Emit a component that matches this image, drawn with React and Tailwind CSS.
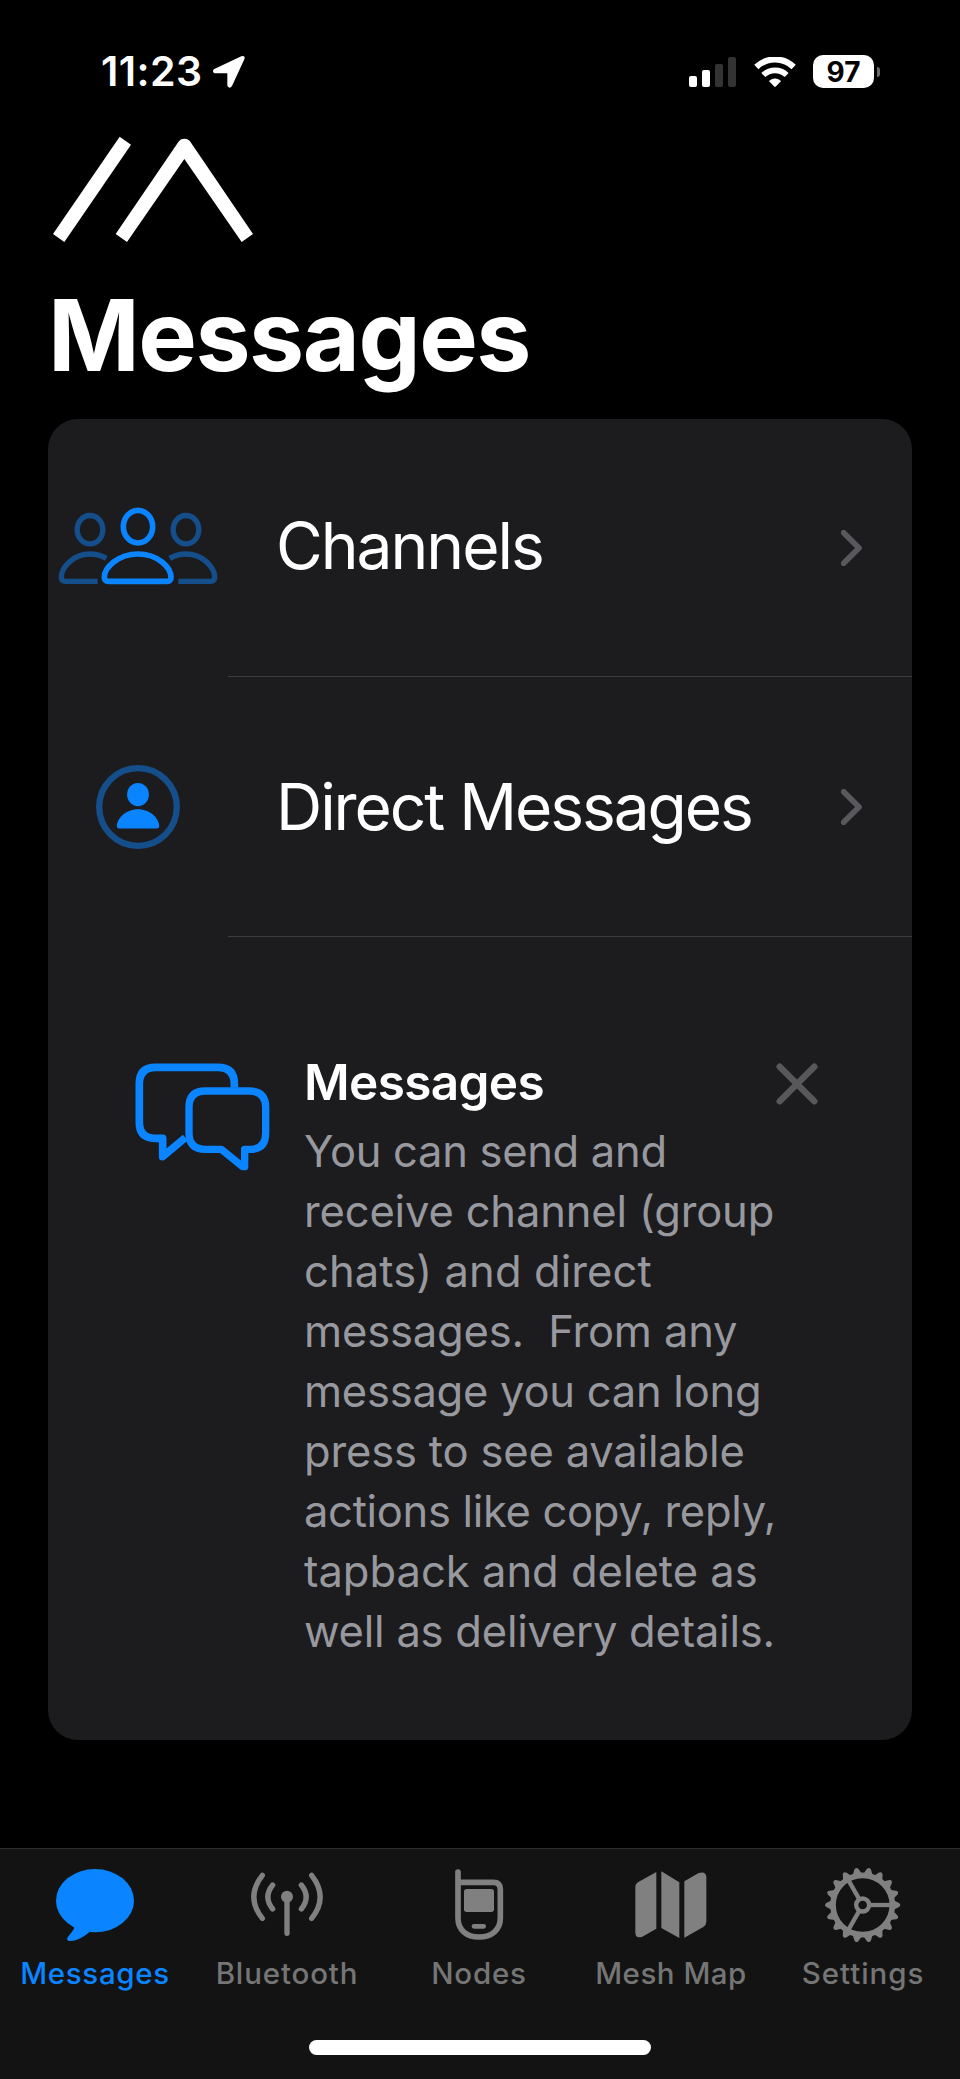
const BLUE = "#0b84ff";
const DIM_BLUE = "#144f8c";
const GRAY = "#808080";

function LocationArrow() {
  return (
    <svg className="ml-[11px] h-8 w-8" viewBox="638 78 96 96" fill="#fff">
      <path d="M642 117 L723 79 Q736 75 732 88 L695 168 Q690 175 685 172 Q681 170 681 164 V130 H647 Q638 130 638 123 Q638 119 642 117Z" />
    </svg>
  );
}

function Signal() {
  return (
    <svg className="h-[30px] w-[47px]" viewBox="147 78 141 90">
      <rect x="147" y="135" width="24" height="33" rx="6" fill="#fff" />
      <rect x="186" y="117" width="24" height="51" rx="6" fill="#fff" />
      <rect x="225" y="99" width="24" height="69" rx="6" fill="#333" />
      <rect x="264" y="78" width="24" height="90" rx="6" fill="#333" />
    </svg>
  );
}

function Wifi() {
  return (
    <svg className="ml-[18px] h-[30px] w-[42px]" viewBox="342 78 126 90" fill="none" stroke="#fff" strokeWidth="18">
      <path d="M349 108 A80 80 0 0 1 461 108" />
      <path d="M370 132 A51 51 0 0 1 440 132" strokeWidth="17" />
      <path d="M388 150 Q405 137 422 150 L408 165 Q405 168 402 165Z" fill="#fff" stroke="#fff" strokeWidth="2" />
    </svg>
  );
}

function StatusBar() {
  return (
    <div className="flex h-[136px] w-full items-start justify-between pl-[101px] pr-20">
      <div className="flex h-[143px] items-center text-[41px] font-semibold tracking-[0.4px]">
        <span>11:23</span>
        <LocationArrow />
      </div>
      <div className="flex h-[143px] items-center">
        <Signal />
        <Wifi />
        <div className="ml-[17px] flex h-[33px] w-[61px] items-center justify-center rounded-[10px] bg-white text-[28px] font-bold leading-none tracking-[0px] text-black">
          97
        </div>
        <div className="ml-[3px] h-[10px] w-[3px] rounded-r-full bg-[#6b6b6b]" />
      </div>
    </div>
  );
}

function Logo() {
  return (
    <svg className="ml-[53px] h-[106px] w-[200px]" viewBox="159 318 600 318" fill="#fff">
      <path d="M359 320 L393 344 L193 636 L159 612Z" />
      <path d="M347 612 L535 336 Q541 326 553 326 Q565 326 571 335 L759 612 L725 636 L553 387 L381 636Z" />
    </svg>
  );
}

function ChannelsIcon() {
  return (
    <svg className="mb-[4px] h-[78px] w-40" viewBox="55 80 480 234" fill="none" strokeWidth="16">
      <g stroke={DIM_BLUE}>
        <ellipse cx="151" cy="148" rx="38.5" ry="42.5" />
        <path d="M174 303 H77 Q65 303 65 291 C65 262 100 221 151 221 Q178 221 200 234" />
        <ellipse cx="439" cy="148" rx="38.5" ry="42.5" />
        <path d="M416 303 H513 Q525 303 525 291 C525 262 490 221 439 221 Q412 221 390 234" />
      </g>
      <g stroke={BLUE} strokeWidth="17">
        <ellipse cx="295" cy="139" rx="44" ry="49" />
        <path d="M207 303 Q194 303 194 291 C194 262 235 221 295 221 C355 221 394 262 394 291 Q394 303 382 303Z" />
      </g>
    </svg>
  );
}

function PersonIcon() {
  return (
    <svg className="h-[84px] w-[84px]" viewBox="0 0 84 84">
      <circle cx="42" cy="42" r="38.8" fill="none" stroke={DIM_BLUE} strokeWidth="6.3" />
      <ellipse cx="42" cy="29.6" rx="10.9" ry="11.7" fill={BLUE} />
      <path d="M23 63.5 Q20.8 63.5 20.8 61 C21 54 29 44.2 42 44.2 C55 44.2 63 54 63.2 61 Q63.2 63.5 61 63.5Z" fill={BLUE} />
    </svg>
  );
}

function BubblesIcon() {
  return (
    <svg className="mt-px h-[108px] w-[135px]" viewBox="44 68 405 324" fill="none" stroke={BLUE} strokeWidth="22.5" strokeLinejoin="round">
      <path d="M342 142 V130 Q342 81 292 81 H106 Q57 81 57 130 V246 Q57 294 104 294 H127 V349 L195 292" strokeWidth="23" />
      <path d="M255 152 H386 Q436 152 436 201 V278 Q436 327 390 327 H373 V379 H367 L303 327 H255 Q206 327 206 278 V201 Q206 152 255 152Z" fill="#1c1c1e" strokeWidth="22" />
    </svg>
  );
}

function Chevron() {
  return (
    <svg className="h-9 w-[21px]" viewBox="303 390 63 108" fill="none" stroke="#59595d" strokeWidth="17" strokeLinecap="round" strokeLinejoin="round">
      <path d="M311 398 L357 444 L311 490" />
    </svg>
  );
}

function Row({ icon, label, className, textClass }) {
  return (
    <div className={"flex " + className}>
      <div className="flex w-[180px] items-center justify-center">{icon}</div>
      <div className="flex flex-1 items-center justify-between border-b border-[#3d3d41] pl-[48px] pr-[50px]">
        <span className={"text-[64px] leading-none whitespace-nowrap " + textClass}>{label}</span>
        <Chevron />
      </div>
    </div>
  );
}

function BubbleTab() {
  return (
    <svg className="h-20 w-[100px]" viewBox="135 75 300 240" fill={BLUE}>
      <ellipse cx="285" cy="182" rx="117" ry="95" />
      <path d="M218 258 Q225 262 221 268 Q214 279 204 290 Q197 302 209 303 Q238 302 270 275Z" />
    </svg>
  );
}

function AntennaTab() {
  return (
    <svg className="h-20 w-[100px]" viewBox="711 75 300 240" fill="none" stroke={GRAY} strokeWidth="16" strokeLinecap="round">
      <circle cx="861" cy="170" r="18" fill={GRAY} stroke="none" />
      <path d="M861 180 V280 M818 135 Q789 171 818 207 M904 135 Q933 171 904 207 M787 106 Q736 171 787 235 M935 106 Q986 171 935 235" />
    </svg>
  );
}

function PhoneTab() {
  return (
    <svg className="h-20 w-[100px]" viewBox="327 75 300 240" fill="none" stroke={GRAY} strokeWidth="17" strokeLinecap="round">
      <path d="M414 96 V235 C414 270 440 291 477 291 C514 291 541 270 541 235 V148 Q541 127 520 127 H416" />
      <rect x="432" y="147" width="90" height="69" rx="8" fill={GRAY} stroke="none" />
      <rect x="455" y="252" width="43" height="14" rx="7" fill={GRAY} stroke="none" />
    </svg>
  );
}

function MapTab() {
  return (
    <svg className="h-20 w-[100px]" viewBox="-55 75 300 240" fill={GRAY}>
      <path d="M51 96 L-3 126 Q-12 131 -12 142 V278 Q-11 297 9 290 L51 266Z" />
      <path d="M66 94 L120 127 V294 L66 264Z" />
      <path d="M135 124 L178 99 Q200 92 201 112 V245 Q201 255 192 261 L135 293Z" />
    </svg>
  );
}

function GearTab() {
  const teeth = Array.from({ length: 18 }, (_, i) => i * 20);
  return (
    <svg className="h-20 w-[100px]" viewBox="-149 -120 300 240" fill="none" stroke={GRAY}>
      <circle r="89" strokeWidth="17" />
      <circle r="19.5" strokeWidth="13" />
      {teeth.map((a) => (
        <path key={a} d="M93 -14 L109 -6 Q117 0 109 6 L93 14Z" fill={GRAY} stroke="none" transform={`rotate(${a})`} />
      ))}
      {[0, 120, 240].map((a) => (
        <path key={a} d="M24 0 H86" strokeWidth="13" transform={`rotate(${a})`} />
      ))}
    </svg>
  );
}

const TABS = [
  { label: "Messages", Icon: BubbleTab, color: "text-[#0b84ff] tracking-[0.65px]" },
  { label: "Bluetooth", Icon: AntennaTab, color: "text-[#757575] tracking-[0.85px]" },
  { label: "Nodes", Icon: PhoneTab, color: "text-[#757575] tracking-[0.8px]" },
  { label: "Mesh Map", Icon: MapTab, color: "text-[#757575] tracking-[0.5px]" },
  { label: "Settings", Icon: GearTab, color: "text-[#757575] tracking-[0.95px]" },
];

const LINES = [
  ["You can send and", "tracking-[-0.3px]"],
  ["receive channel (group", "tracking-[-0.16px]"],
  ["chats) and direct", "tracking-[0.1px]"],
  ["messages.  From any", "tracking-[-0.15px]"],
  ["message you can long", "tracking-[-0.25px]"],
  ["press to see available", "tracking-[-0.17px]"],
  ["actions like copy, reply,", "tracking-[-0.32px]"],
  ["tapback and delete as", "tracking-[0px]"],
  ["well as delivery details.", "tracking-[-0.22px]"],
];

export default function App() {
  return (
    <div className="flex h-[2079px] w-[960px] flex-col overflow-hidden bg-black font-['Inter',sans-serif] text-white">
      <StatusBar />
      <Logo />
      <h1 className="ml-[48px] mt-[34px] h-[120px] text-[98.5px] font-bold leading-[120px] tracking-[-1.5px]">Messages</h1>
      <main className="mx-12 mt-[23px] flex h-[1321px] flex-col rounded-[30px] bg-[#1c1c1e]">
        <Row icon={<ChannelsIcon />} label="Channels" className="h-[258px]" textClass="mb-[3px] tracking-[-2px]" />
        <Row icon={<PersonIcon />} label="Direct Messages" className="h-[260px]" textClass="tracking-[-2.05px]" />
        <section className="flex pl-[87px] pt-[125px]">
          <BubblesIcon />
          <div className="ml-[34px] w-[472px]">
            <h2 className="h-[40px] text-[49.5px] font-semibold leading-[40px] tracking-[-0.65px]">Messages</h2>
            <div className="mt-[19px] text-[43.5px] leading-[60px] text-[#98989f]">
              {LINES.map(([line, tracking]) => (
                <p key={line} className={"whitespace-pre " + tracking}>{line}</p>
              ))}
            </div>
          </div>
          <svg className="mt-px h-[42px] w-[42px]" viewBox="0 0 42 42" fill="none" stroke="#58585a" strokeWidth="6.4" strokeLinecap="round">
            <path d="M3.7 3.7 L38.3 38.3 M38.3 3.7 L3.7 38.3" />
          </svg>
        </section>
      </main>
      <footer className="mt-auto flex h-[231px] flex-col items-center border-t border-[#2e2e2e] bg-[#131313]">
        <nav className="mr-[2px] grid w-full shrink-0 grid-cols-5 pt-4">
          {TABS.map(({ label, Icon, color }) => (
            <div key={label} className="flex flex-col items-center">
              <Icon />
              <span className={"mt-2 h-10 whitespace-nowrap text-[29.5px] font-medium leading-[40px] " + color}>{label}</span>
            </div>
          ))}
        </nav>
        <div className="mt-[47px] h-[15px] w-[342px] rounded-full bg-white" />
      </footer>
    </div>
  );
}
